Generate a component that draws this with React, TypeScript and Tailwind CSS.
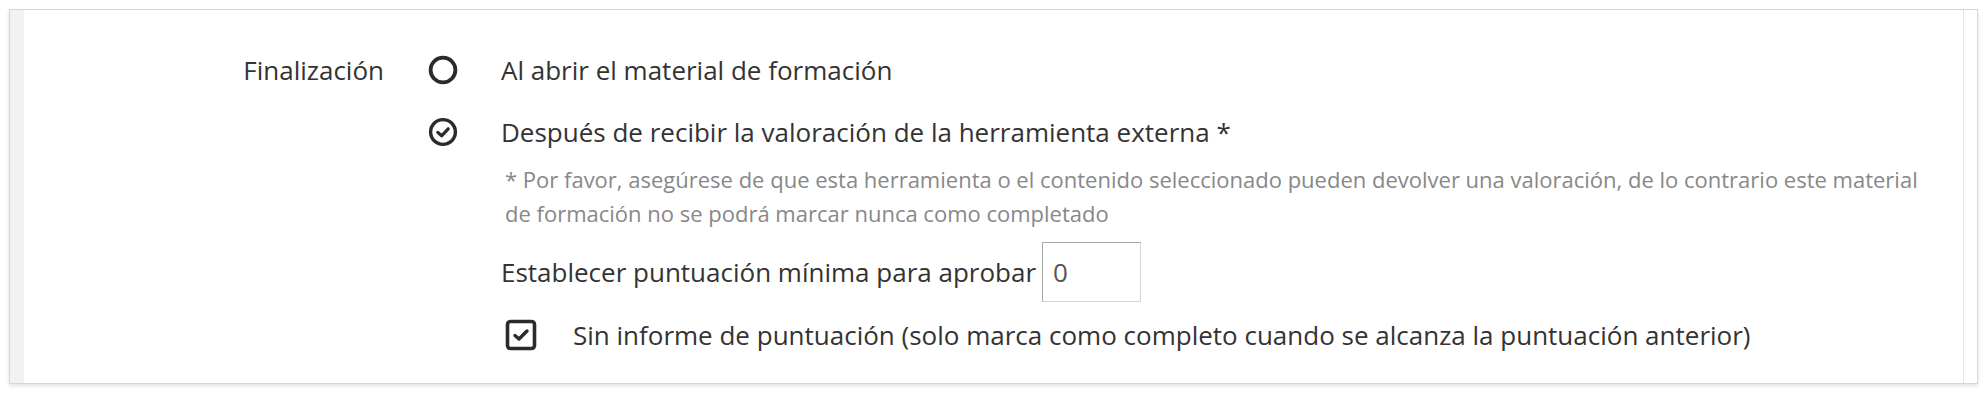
import React from "react";

function RadioEmpty() {
  return (
    <svg width="32" height="32" viewBox="0 0 32 32" className="block">
      <circle cx="16" cy="16" r="12.4" fill="none" stroke="#2b2b2b" strokeWidth="3.8" />
    </svg>
  );
}

function RadioChecked() {
  return (
    <svg width="32" height="32" viewBox="0 0 32 32" className="block">
      <circle cx="16" cy="16" r="12.4" fill="none" stroke="#2b2b2b" strokeWidth="3.4" />
      <path d="M10.8 16.4 L14.6 19.8 L21.2 12.8" fill="none" stroke="#2b2b2b" strokeWidth="3.2" strokeLinecap="round" strokeLinejoin="round" />
    </svg>
  );
}

function CheckBox() {
  return (
    <svg width="32" height="32" viewBox="0 0 32 32" className="block">
      <rect x="2.5" y="2.5" width="27" height="27" rx="3" fill="none" stroke="#2b2b2b" strokeWidth="3.6" />
      <path d="M10 16.5 L14 20 L22 12" fill="none" stroke="#2b2b2b" strokeWidth="3.4" strokeLinecap="round" strokeLinejoin="round" />
    </svg>
  );
}

export default function App() {
  return (
    <div className="w-[1988px] h-[394px] bg-white p-[9px] pb-[10px] pr-[10px]" style={{ fontFamily: "'Open Sans', 'Noto Sans', sans-serif" }}>
      <div className="h-full flex border border-[#d6d6d6] shadow-[0_2px_4px_rgba(0,0,0,0.12)]">
        <div className="w-[14px] bg-[#f2f2f2]" />
        <div className="flex-1 flex pt-[42px]">
          <div className="w-[360px] h-[36px] flex items-center justify-end text-[26px] text-[#333]">Finalización</div>
          <div className="flex flex-col ml-[43px]">
            <div className="flex items-center h-[36px]">
              <div className="w-[32px]"><RadioEmpty /></div>
              <span className="ml-[42px] text-[26px] text-[#333]">Al abrir el material de formación</span>
            </div>
            <div className="flex items-center h-[36px] mt-[26px]">
              <div className="w-[32px]"><RadioChecked /></div>
              <span className="ml-[42px] text-[26px] text-[#333]">Después de recibir la valoración de la herramienta externa *</span>
            </div>
            <div className="ml-[78px] mt-[12px] text-[22px] leading-[34px] text-[#888] w-[1440px]">
              * Por favor, asegúrese de que esta herramienta o el contenido seleccionado pueden devolver una valoración, de lo contrario este material de formación no se podrá marcar nunca como completado
            </div>
            <div className="ml-[74px] mt-[12px] flex items-center">
              <span className="text-[26px] text-[#333]">Establecer puntuación mínima para aprobar</span>
              <div className="ml-[6px] w-[99px] h-[60px] border border-[#d4d4d4] border-t-[#a9a9a9] border-l-[#a9a9a9] flex items-center px-[10px] text-[26px] text-[#555]">0</div>
            </div>
            <div className="ml-[78px] mt-[17px] flex items-center h-[32px]">
              <CheckBox />
              <span className="ml-[36px] text-[26px] text-[#333]">Sin informe de puntuación (solo marca como completo cuando se alcanza la puntuación anterior)</span>
            </div>
          </div>
        </div>
        <div className="w-[14px] border-l border-[#e6e6e6]" />
      </div>
    </div>
  );
}
